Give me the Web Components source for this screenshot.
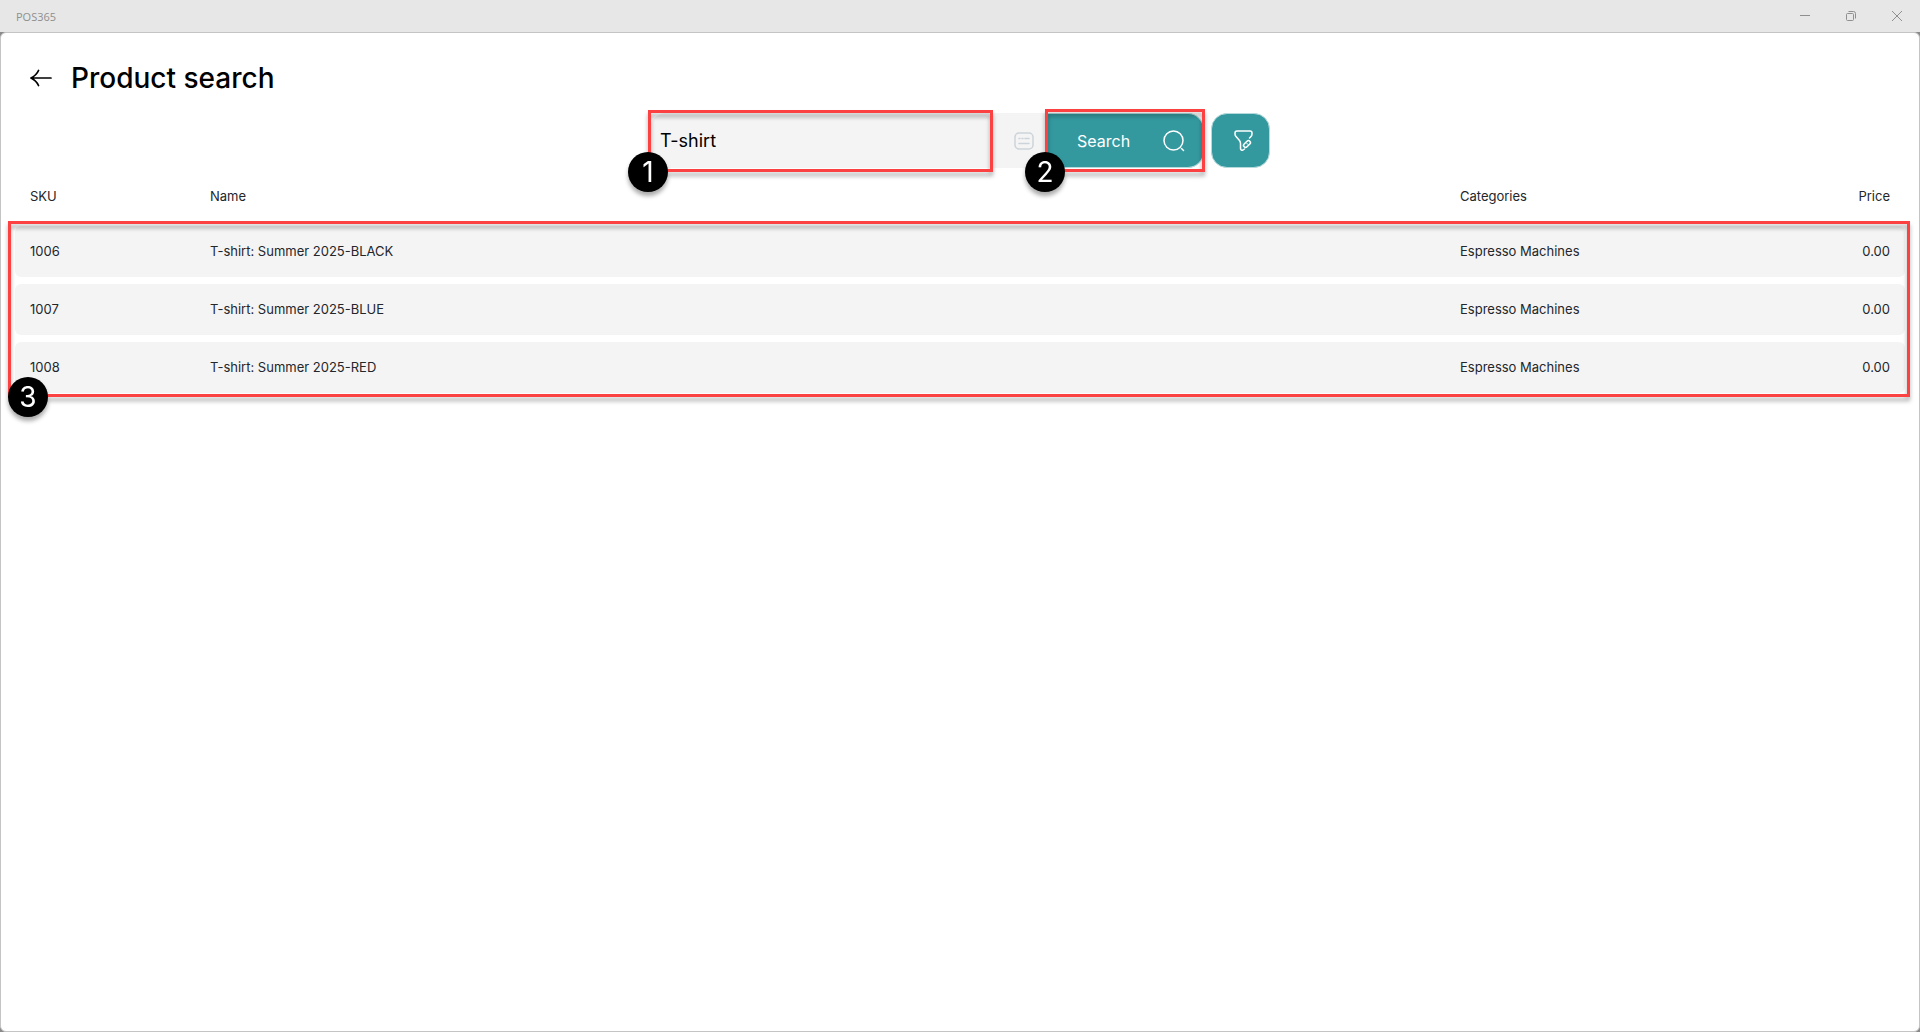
<!DOCTYPE html>
<html lang="en">
<head>
<meta charset="utf-8">
<title>POS365</title>
<style>
html, body { height: 100%; margin: 0; }
body { font-family: Inter, "Liberation Sans", sans-serif; font-optical-sizing: none; color: #23262b; background: #8a8a8a; }
</style>
</head>
<body>
<pos-app></pos-app>

<template id="t-app">
<style>
:host { display: flex; flex-direction: column; min-height: 100vh; box-sizing: border-box; }
main { flex: 1; display: flex; flex-direction: column; background: #fff; border: 1px solid #c4c4c4; border-radius: 6px; padding: 0 7px; }
.bar { display: flex; justify-content: center; margin-top: 18px; }
</style>
<window-bar>POS365</window-bar>
<main>
<page-header>Product search</page-header>
<div class="bar"><search-bar></search-bar></div>
<product-table></product-table>
</main>
</template>

<template id="t-window">
<style>
:host { display: flex; justify-content: space-between; align-items: center; height: 32px; padding-left: 16px; background: #e7e7e7; color: #8f8f8f; font: 11px/16px "Open Sans", sans-serif; }
.title { padding-top: 2px; }
.controls { display: flex; height: 100%; }
button { width: 46px; height: 32px; padding: 0; border: 0; background: none; color: #8f8f8f; display: grid; place-items: center; }
svg { display: block; fill: none; stroke: currentColor; }
</style>
<span class="title"><slot></slot></span>
<div class="controls">
<button aria-label="Minimize"><svg width="10" height="10"><path d="M0 4.5H10"/></svg></button>
<button aria-label="Restore"><svg width="10" height="10"><rect x=".5" y="2.5" width="7" height="7" rx="1"/><path d="M2.5.5H7.5A2 2 0 0 1 9.5 2.5V7.5"/></svg></button>
<button aria-label="Close"><svg width="10" height="10"><path d="M0 0L10 10M10 0L0 10"/></svg></button>
</div>
</template>

<template id="t-header">
<style>
:host { display: flex; align-items: center; gap: 19px; padding: 28px 22px 0; height: 34px; }
button { display: block; padding: 0; border: 0; background: none; color: #000; }
svg { display: block; fill: none; stroke: currentColor; stroke-width: 1.7; stroke-linecap: round; stroke-linejoin: round; }
h1 { margin: 0; font-size: 28px; line-height: 34px; font-weight: 500; color: #000; }
</style>
<button aria-label="Back"><svg width="22" height="18"><path d="M21 9H1M8.500 1.500C7 5 4 7.500 1 9C4 10.500 7 13 8.500 16.500"/></svg></button>
<h1><slot></slot></h1>
</template>

<template id="t-search">
<style>
:host { display: flex; gap: 7px; }
form { display: flex; width: 554px; height: 55px; background: #f4f4f4; border-radius: 16px; }
step-mark.field { flex: 1; --inset: -3px -2px -4px; }
step-mark.go { --inset: -4px -1px -4px 0; }
input { box-sizing: border-box; width: 100%; height: 55px; padding: 0 10px; border: 0; outline: 0; background: none; font: 18px/24px Inter, sans-serif; color: #000; }
button { display: flex; align-items: center; padding: 0; border: 0; color: #fff; font: 16px/24px Inter, sans-serif; }
svg { display: block; fill: none; stroke: currentColor; stroke-linecap: round; stroke-linejoin: round; }
.kb { padding: 0 11px 0 23px; background: none; color: #cdd3da; }
.submit { width: 159px; height: 55px; justify-content: space-between; padding: 0 18px 0 32px; background: #33999f; border: 1px solid #b5dadc; border-left: 0; border-radius: 0 16px 16px 0; }
.filter { width: 59px; height: 55px; justify-content: center; padding-left: 6px; background: #33999f; border: 1px solid #b5dadc; border-radius: 16px; }
</style>
<form onsubmit="return false">
<step-mark class="field" step="1"><input type="text" value="T-shirt" aria-label="Search products"></step-mark>
<button type="button" class="kb" aria-label="Keyboard"><svg width="20" height="18" stroke-width="1.500"><rect x="1" y="1" width="18" height="16" rx="4"/><path d="M5 6.500H6M8 6.500H9M11 6.500H15M5 11.500H15"/></svg></button>
<step-mark class="go" step="2"><button class="submit">Search<svg width="22" height="22" stroke-width="1.500"><circle cx="10.500" cy="10.500" r="9.500"/><path d="M18.500 18.500L20.500 20.500"/></svg></button></step-mark>
</form>
<button class="filter" aria-label="Filter"><svg width="20" height="22" stroke-width="1.500"><path d="M15.500 8L17 6.500Q18 5.500 18 4V3Q18 1 16 1H3Q1 1 1 3V4Q1 5.500 2 6.500L5.500 10.500Q6.500 12 6.500 13.500V18.500Q7 21 9 20L10.500 19"/><rect x="9" y="12" width="8" height="4" rx="2" transform="rotate(-45 13 14)"/><path stroke-width="1" d="M12.500 13L14 14.500"/></svg></button>
</template>

<template id="t-mark">
<style>
:host { display: block; position: relative; }
.ring { position: absolute; inset: var(--inset); border: 3px solid #fb4142; filter: drop-shadow(0 4px 2px rgba(0,0,0,.33)); pointer-events: none; }
.badge { position: absolute; left: -23px; bottom: -23px; width: 40px; height: 40px; border-radius: 50%; background: #000; color: #fff; display: grid; place-items: center; font: 28px/40px Inter, sans-serif; }
:host([step="3"]) .badge { left: -3px; }
</style>
<slot></slot>
<div class="ring"><span class="badge"></span></div>
</template>

<template id="t-table">
<style>
:host { display: block; margin-top: 5px; }
step-mark { --inset: 48px 2px -4px 0; }
table { width: 100%; border-spacing: 0; padding: 0 7px; table-layout: fixed; font-size: 13px; line-height: 17px; }
th, td { padding: 0 15px; font-weight: 400; text-align: left; }
th { height: 46px; }
td { height: 51px; background: #f4f4f4; }
tr.gap td { height: 7px; background: none; }
td:first-child { border-radius: 6px 0 0 6px; }
td:last-child { border-radius: 0 6px 6px 0; }
.sku { width: 150px; }
.cat { width: 215px; }
.price { width: 185px; }
th:last-child, td:last-child { text-align: right; }
</style>
<step-mark step="3">
<table>
<thead><tr><th class="sku">SKU</th><th>Name</th><th class="cat">Categories</th><th class="price">Price</th></tr></thead>
<tbody></tbody>
</table>
</step-mark>
</template>

<script>
function stamp(host, id) {
  const root = host.attachShadow({ mode: "open" });
  root.append(document.getElementById(id).content.cloneNode(true));
  return root;
}
function define(name, id, setup) {
  customElements.define(name, class extends HTMLElement {
    constructor() {
      super();
      const root = stamp(this, id);
      if (setup) setup(this, root);
    }
  });
}
customElements.define("step-mark", class extends HTMLElement {
  constructor() { super(); stamp(this, "t-mark"); }
  connectedCallback() { this.shadowRoot.querySelector(".badge").textContent = this.getAttribute("step"); }
});
define("window-bar", "t-window");
define("page-header", "t-header");
define("search-bar", "t-search");
define("product-table", "t-table", (host, root) => {
  const rows = [
    ["1006", "T-shirt: Summer 2025-BLACK", "Espresso Machines", "0.00"],
    ["1007", "T-shirt: Summer 2025-BLUE", "Espresso Machines", "0.00"],
    ["1008", "T-shirt: Summer 2025-RED", "Espresso Machines", "0.00"]
  ];
  const body = root.querySelector("tbody");
  for (const row of rows) {
    body.insertRow().className = "gap";
    body.lastElementChild.insertCell().colSpan = 4;
    const tr = body.insertRow();
    for (const text of row) tr.insertCell().textContent = text;
  }
});
define("pos-app", "t-app");
</script>
</body>
</html>
